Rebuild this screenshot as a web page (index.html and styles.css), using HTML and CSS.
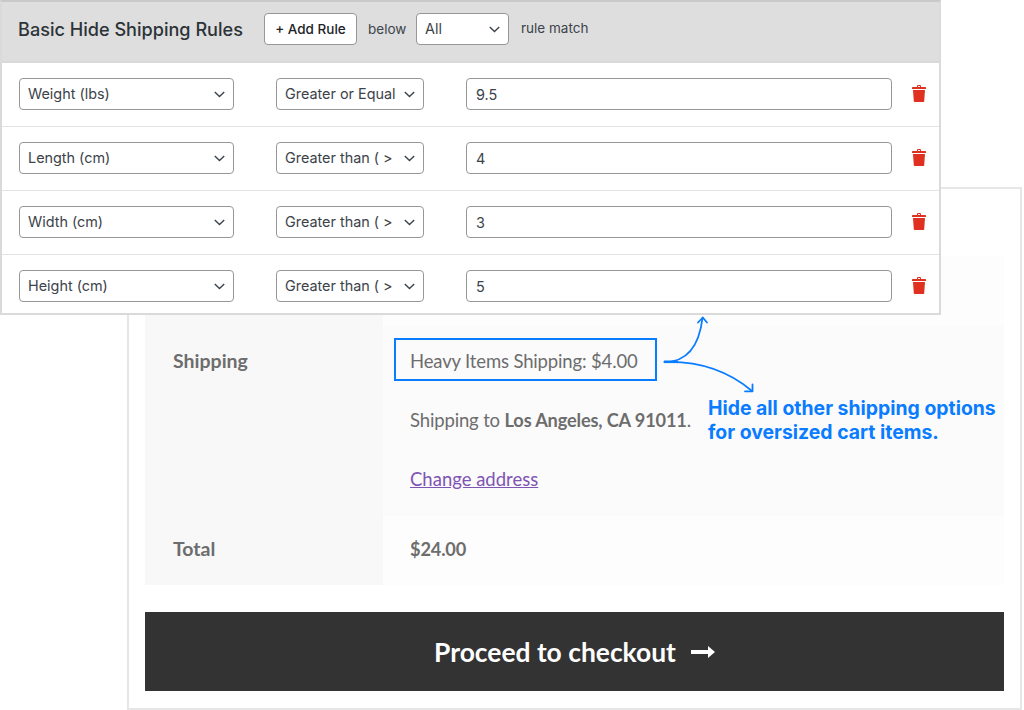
FILE: index.html
```html
<!DOCTYPE html>
<html lang="en">
<head>
<meta charset="utf-8">
<title>Basic Hide Shipping Rules</title>
<link rel="stylesheet" href="styles.css">
</head>
<body>
<svg width="0" height="0" class="defs" aria-hidden="true">
  <defs>
    <symbol id="chev" viewBox="0 0 11 7"><path d="M.8 1 5.5 5.6 10.2 1" fill="none" stroke="currentColor" stroke-width="1.4"/></symbol>
    <symbol id="trash" viewBox="0 0 14 17"><path d="M5 2V1.2C5 .5 5.6 0 6.2 0h1.6C8.4 0 9 .5 9 1.2V2h4.3c.4 0 .7.3.7.7V4H0V2.700c0-.4.3-.7.7-.7zM6.100 2h1.800v-.9H6.100z" fill="currentColor"/><path d="M1 5h12l-.8 11c0 .6-.5 1-1.100 1H2.900c-.6 0-1.100-.4-1.100-1z" fill="currentColor"/></symbol>
  </defs>
</svg>
<main class="page">
  <section class="cart">
    <table class="totals">
      <tr class="row-first"><th></th><td></td></tr>
      <tr class="row-ship">
        <th>Shipping</th>
        <td>
          <div class="method"><span>Heavy Items Shipping: $4.00</span></div>
          <p class="dest">Shipping to <strong>Los Angeles, CA 91011</strong>.</p>
          <a class="change" href="#">Change address</a>
        </td>
      </tr>
      <tr class="row-total"><th>Total</th><td><strong>$24.00</strong></td></tr>
    </table>
    <a class="checkout" href="#">Proceed to checkout
      <svg class="checkout-arrow" viewBox="0 0 24 14" width="24" height="14"><path d="M0 5h17V1l7 6-7 6V9H0z" fill="#fff"/></svg>
    </a>
  </section>

  <section class="rules">
    <header class="rules-head">
      <h1 class="rules-title">Basic Hide Shipping Rules</h1>
      <button class="add" type="button">+ Add Rule</button>
      <span class="note note-below">below</span>
      <div class="field f-all"><select><option>All</option></select><svg class="chev"><use href="#chev"/></svg></div>
      <span class="note note-match">rule match</span>
    </header>
    <div class="rule">
      <div class="field f-attr"><select><option>Weight (lbs)</option></select><svg class="chev"><use href="#chev"/></svg></div>
      <div class="field f-op"><select><option>Greater or Equal ( &gt;= )</option></select><svg class="chev"><use href="#chev"/></svg></div>
      <input class="val" type="text" value="9.5">
      <svg class="trash"><use href="#trash"/></svg>
    </div>
    <div class="rule">
      <div class="field f-attr"><select><option>Length (cm)</option></select><svg class="chev"><use href="#chev"/></svg></div>
      <div class="field f-op"><select><option>Greater than ( &gt; )</option></select><svg class="chev"><use href="#chev"/></svg></div>
      <input class="val" type="text" value="4">
      <svg class="trash"><use href="#trash"/></svg>
    </div>
    <div class="rule">
      <div class="field f-attr"><select><option>Width (cm)</option></select><svg class="chev"><use href="#chev"/></svg></div>
      <div class="field f-op"><select><option>Greater than ( &gt; )</option></select><svg class="chev"><use href="#chev"/></svg></div>
      <input class="val" type="text" value="3">
      <svg class="trash"><use href="#trash"/></svg>
    </div>
    <div class="rule">
      <div class="field f-attr"><select><option>Height (cm)</option></select><svg class="chev"><use href="#chev"/></svg></div>
      <div class="field f-op"><select><option>Greater than ( &gt; )</option></select><svg class="chev"><use href="#chev"/></svg></div>
      <input class="val" type="text" value="5">
      <svg class="trash"><use href="#trash"/></svg>
    </div>
  </section>

  <svg class="arrows" viewBox="0 0 100 85" width="100" height="85">
    <g fill="none" stroke="#0a7cff" stroke-width="1.800" stroke-linecap="round" stroke-linejoin="round">
      <path d="M4.500 52C26 52 39 37 42.500 8"/>
      <path d="M38 12.500 42.800 7.500 47 12.500"/>
      <path d="M4.500 52C37 51 66 59 92 81"/>
      <path d="M92.500 74.500V81.300H85"/>
    </g>
    <path d="M4 50.500h14v2.600H4z" fill="#0a7cff"/>
  </svg>
  <p class="callout">Hide all other shipping options<br>for oversized cart items.</p>
</main>
</body>
</html>
```
FILE: styles.css
```css
* { box-sizing: border-box; }
html, body { margin: 0; padding: 0; background: #fff; }
.defs { position: absolute; }
.page {
  position: relative;
  width: 1024px;
  height: 710px;
  overflow: hidden;
  padding: 187px 0 0 127px;
}

/* cart card */
.cart {
  width: 895px;
  height: 523px;
  border: 2px solid #e6e6e6;
  padding: 67px 16px 0;
  font-family: "Lato", "Noto Sans", sans-serif;
  font-size: 18.5px;
  letter-spacing: -0.15px;
  color: #6d6d6d;
}
.totals {
  width: 859px;
  border-collapse: collapse;
  table-layout: fixed;
}
.totals th, .totals td { padding: 0; vertical-align: top; text-align: left; }
.totals th {
  width: 238px;
  background: #f8f8f8;
  padding-left: 28px;
  font-size: 19.5px;
  letter-spacing: 0;
  font-weight: 700;
}
.totals td { background: #fdfdfd; padding-left: 27px; }
.row-first th, .row-first td { height: 70px; }
.row-ship th, .row-ship td { height: 190px; }
.row-ship th { padding-top: 22px; line-height: 25px; }
.row-ship td { background: #fbfbfb; }
.row-total th, .row-total td { height: 69px; padding-top: 20px; line-height: 25px; }
.row-total td { padding-top: 21px; }
.totals strong { font-size: 18.2px; font-weight: 700; }

.method {
  width: 263px;
  height: 43px;
  margin: 12px 0 0 -16px;
  border: 2px solid #0a7cff;
  padding: 3px 0 0 14px;
  display: flex;
  align-items: center;
}
.dest { margin: 27px 0 0; line-height: 25px; white-space: nowrap; }
.change { display: block; margin-top: 34px; line-height: 25px; color: #7f54b3; text-decoration: underline; letter-spacing: 0; }

.checkout {
  display: flex;
  align-items: center;
  justify-content: center;
  gap: 15px;
  width: 859px;
  height: 79px;
  margin-top: 27px;
  background: #333;
  color: #fff;
  font-size: 26.4px;
  letter-spacing: 0;
  font-weight: 700;
  text-decoration: none;
}
.checkout-arrow { display: block; }

/* rules panel */
.rules {
  position: absolute;
  top: 0;
  left: 0;
  width: 941px;
  height: 315px;
  overflow: hidden;
  background: #fff;
  border: 2px solid #dadada;
  border-top-color: #c9c9c9;
  font-family: "Inter", "Liberation Sans", sans-serif;
  color: #3c434a;
}
.rules-head {
  display: flex;
  align-items: center;
  height: 61px;
  padding: 0 0 5px 16px;
  background: #dedede;
  border-bottom: 2px solid #d9d9d9;
}
.rules-title {
  margin: 0 21px 0 0;
  width: 225px;
  font-size: 18.1px;
  font-weight: 500;
  color: #2c3338;
  white-space: nowrap;
}
.add {
  width: 93px;
  height: 32px;
  padding: 0;
  background: #fff;
  border: 1px solid #979797;
  border-radius: 4px;
  font: 500 13.500px "Inter", "Liberation Sans", sans-serif;
  color: #1d2327;
}
.note { font-size: 13.500px; color: #3c434a; }
.note-below { margin: 0 10px 0 11px; width: 38px; white-space: nowrap; }
.note-match { margin: -2px 0 0 12px; }

.rule {
  display: flex;
  align-items: flex-start;
  height: 64px;
  padding: 15px 0 0 17px;
  border-bottom: 1px solid #e4e4e4;
  flex: none;
}
.rule:last-child { border-bottom: 0; }

.field { position: relative; height: 32px; flex: none; }
.field select {
  display: block;
  width: 100%;
  height: 100%;
  padding: 0 28px 1px 8px;
  appearance: none;
  -webkit-appearance: none;
  background: #fff;
  border: 1px solid #979797;
  border-radius: 4px;
  font: 400 14.400px "Inter", "Liberation Sans", sans-serif;
  color: #3c434a;
}
.f-all { width: 93px; }
.f-attr { width: 215px; margin-right: 42px; }
.f-op { width: 148px; margin-right: 42px; }
.chev {
  position: absolute;
  top: 13px;
  right: 9px;
  width: 11px;
  height: 7px;
  color: #3c434a;
  pointer-events: none;
}
.val {
  width: 426px;
  height: 32px;
  padding: 0 9px;
  background: #fff;
  border: 1px solid #979797;
  border-radius: 4px;
  font: 400 14.400px "Inter", "Liberation Sans", sans-serif;
  color: #3c434a;
}
.trash {
  width: 14px;
  height: 17px;
  margin: 7px 0 0 20px;
  color: #e03020;
}

/* annotation */
.arrows { position: absolute; top: 310px; left: 660px; }
.callout {
  position: absolute;
  top: 396px;
  left: 708px;
  margin: 0;
  font: 700 19.400px/24px "Inter", "Liberation Sans", sans-serif;
  color: #0a7cff;
  white-space: nowrap;
}
```
